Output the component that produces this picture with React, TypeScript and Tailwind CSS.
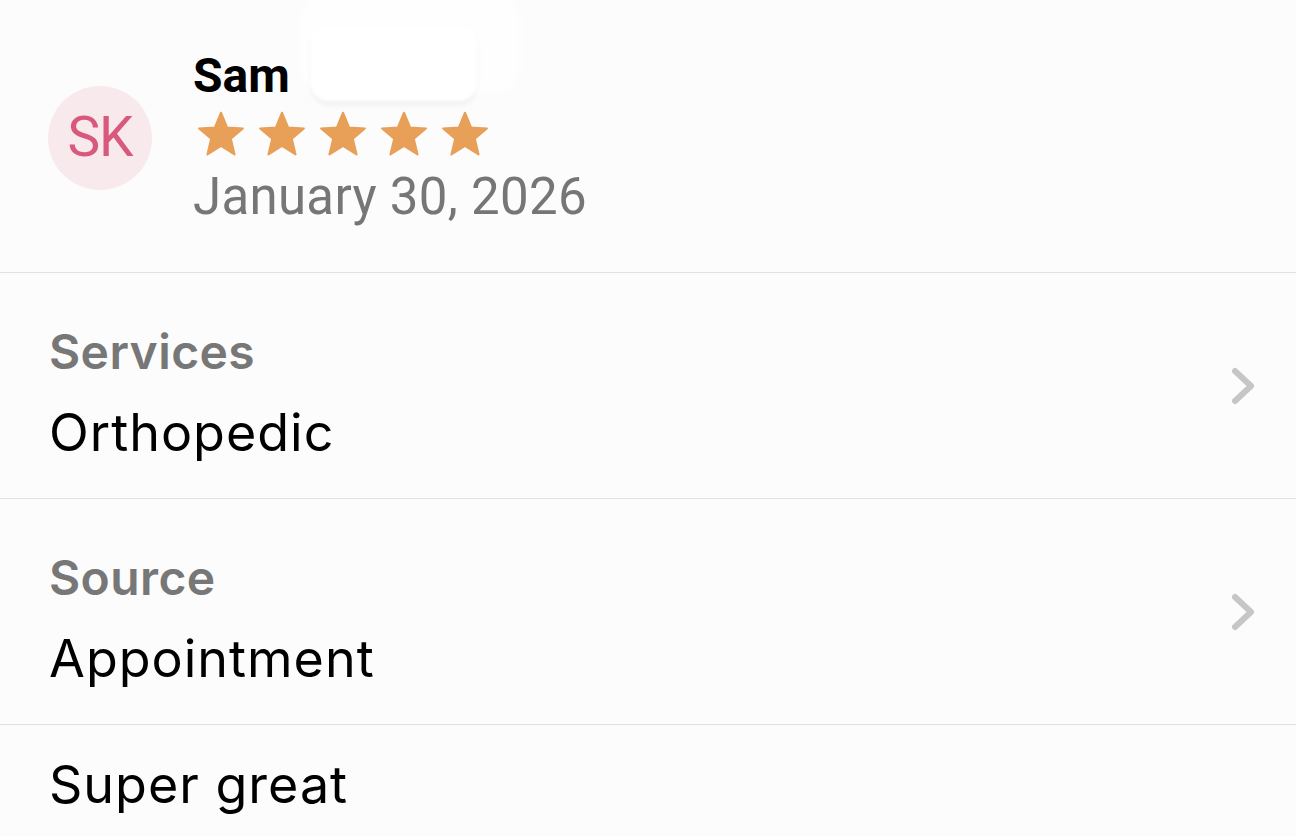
import React from "react";

function Star() {
  return (
    <svg width="50" height="48" viewBox="0 0 24 23" className="block">
      <path
        d="M12 0.8 L14.9 7.9 L22.5 8.4 L16.7 13.3 L18.5 20.8 L12 16.7 L5.5 20.8 L7.3 13.3 L1.5 8.4 L9.1 7.9 Z"
        fill="#e89f57"
        stroke="#e89f57"
        strokeWidth="1"
        strokeLinejoin="round"
      />
    </svg>
  );
}

function Chevron() {
  return (
    <svg width="26" height="40" viewBox="0 0 26 40" className="block">
      <path
        d="M5 5 L21 20 L5 35"
        fill="none"
        stroke="#c6c6c6"
        strokeWidth="6"
        strokeLinecap="round"
        strokeLinejoin="round"
      />
    </svg>
  );
}

const rowFont = { fontFamily: "Inter, 'Noto Sans', sans-serif" };

function Row({ label, value }: { label: string; value: string }) {
  return (
    <div className="flex border-t-[1.5px] border-[#e0e1e1] pl-[49px] pr-[40px] h-[226px]" style={rowFont}>
      <div className="flex-1 flex flex-col pt-[49px]">
        <div className="text-[48px] leading-[60px] font-semibold text-[#777777] tracking-[0.4px]">{label}</div>
        <div className="mt-[21px] text-[52px] leading-[60px] text-black tracking-[1px]">{value}</div>
      </div>
      <div className="self-center">
        <Chevron />
      </div>
    </div>
  );
}

export default function App() {
  return (
    <div
      className="w-[1296px] h-[836px] overflow-hidden bg-[#fcfcfc] relative"
      style={{ fontFamily: "Roboto, 'Noto Sans', sans-serif" }}
    >
      <div className="absolute left-[300px] top-[-6px] w-[220px] h-[100px] bg-white/70 rounded-3xl blur-[6px]" />
      {/* Header */}
      <div className="flex items-center h-[272px] pl-[48px] pt-[3px]">
        <div className="w-[104px] h-[104px] rounded-full bg-[#f8e9ed] flex items-center justify-center shrink-0">
          <span className="text-[55px] leading-none text-[#d9597c] tracking-[-1px]">SK</span>
        </div>
        <div className="ml-[41px] flex flex-col">
          <div className="relative">
            <span className="text-[48px] leading-[56px] font-bold text-black">Sam</span>
            <span className="absolute left-[118px] top-[-22px] w-[166px] h-[75px] rounded-[18px] bg-white blur-[1.5px] shadow-[0_4px_5px_rgba(0,0,0,0.05)]" />
          </div>
          <div className="flex gap-[11px] mt-[7px] h-[48px] ml-[3px]">
            <Star />
            <Star />
            <Star />
            <Star />
            <Star />
          </div>
          <div className="mt-[8px] text-[51px] leading-[60px] text-[#767676] tracking-[0.3px]">January 30, 2026</div>
        </div>
      </div>
      <Row label="Services" value="Orthopedic" />
      <Row label="Source" value="Appointment" />
      <div className="border-t-[1.5px] border-[#e0e1e1] pl-[49px] pt-[30px]" style={rowFont}>
        <div className="text-[52px] leading-[60px] text-black tracking-[1px]">Super great</div>
      </div>
    </div>
  );
}
